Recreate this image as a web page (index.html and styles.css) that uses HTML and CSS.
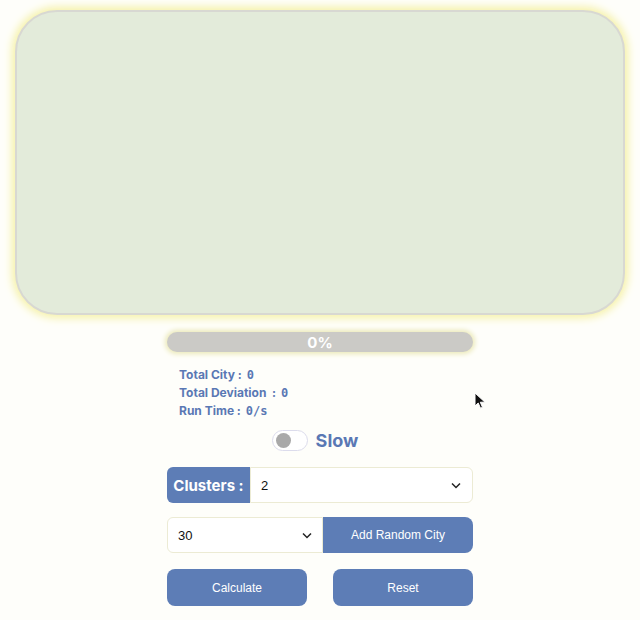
FILE: index.html
```html
<!DOCTYPE html>
<html lang="en">
  <head>
    <meta charset="UTF-8" />
    <title>Clustering</title>
    <link rel="stylesheet" href="styles.css">
  </head>
  <body>
    <div class="board"></div>

    <div class="controls">
      <div class="progress"><span>0%</span></div>

      <div class="stats">
        <div>Total City : <code>0</code></div>
        <div>Total Deviation &nbsp;: <code>0</code></div>
        <div>Run Time : <code>0/s</code></div>
      </div>

      <div class="speed">
        <label class="switch"><span class="knob"></span></label>
        <span class="speed-label">Slow</span>
      </div>

      <div class="cluster-row">
        <span class="cluster-label">Clusters :</span>
        <div class="select">
          <span>2</span>
          <svg width="10" height="7" viewBox="0 0 10 7"><path d="M1 1.5 5 5.5l4-4" fill="none" stroke="#222" stroke-width="1.5"/></svg>
        </div>
      </div>

      <div class="city-row">
        <div class="select">
          <span>30</span>
          <svg width="10" height="7" viewBox="0 0 10 7"><path d="M1 1.5 5 5.5l4-4" fill="none" stroke="#222" stroke-width="1.5"/></svg>
        </div>
        <button class="btn btn-add">Add Random City</button>
      </div>

      <div class="action-row">
        <button class="btn">Calculate</button>
        <button class="btn">Reset</button>
      </div>
    </div>

    <!-- mouse pointer captured in the shot -->
    <svg class="cursor" width="12" height="18" viewBox="0 0 12 18"><path d="M1 1v13l3.2-3 2.3 5.2 2-.9-2.2-5.1H11z" fill="#111" stroke="#fff" stroke-width="1"/></svg>
  </body>
</html>
```

FILE: styles.css
```css
body {
  margin: 0;
  background-color: #fefefa;
  font-family: Inter, "Noto Sans", sans-serif;
  position: relative;
}
.board {
  margin: 10px 15px 0;
  height: 301px;
  background-color: #e3ebda;
  border: 2px solid #d8d8d2;
  border-radius: 42px;
  box-shadow: 0 0 8px 3px #f5f1a6;
}
.controls {
  width: 306px;
  margin: 17px auto 0;
}
.progress {
  height: 20px;
  border-radius: 10px;
  background-color: #cbcac6;
  box-shadow: 0 0 5px 2px #ebe9b8;
  display: flex;
  align-items: center;
  justify-content: center;
}
.progress span {
  color: #fff;
  font-weight: 700;
  font-size: 15px;
}
.stats {
  margin-top: 14px;
  padding-left: 12px;
  color: #5a78b4;
  font-size: 12px;
  font-weight: 700;
  line-height: 18px;
}
.stats code {
  font-family: "DejaVu Sans Mono", monospace;
  font-size: 12px;
  font-weight: 700;
  margin-left: 2px;
}
.speed {
  margin-top: 9px;
  display: flex;
  align-items: center;
  justify-content: center;
  gap: 8px;
  height: 22px;
}
.switch {
  width: 31px;
  height: 19px;
  border: 1px solid #dcdcec;
  border-radius: 11px;
  background-color: #fff;
  display: flex;
  align-items: center;
  padding-left: 3px;
  box-sizing: content-box;
  margin-left: -10px;
}
.knob {
  width: 15px;
  height: 15px;
  border-radius: 50%;
  background-color: #a9a9a9;
}
.speed-label {
  color: #5a78b4;
  font-size: 18px;
  font-weight: 700;
}
.cluster-row {
  margin-top: 16px;
  display: flex;
  height: 36px;
}
.cluster-label {
  width: 83px;
  background-color: #5d7db6;
  color: #fff;
  font-weight: 700;
  font-size: 15px;
  border-radius: 6px 0 0 6px;
  display: flex;
  align-items: center;
  justify-content: center;
}
.select {
  flex: 1;
  display: flex;
  align-items: center;
  justify-content: space-between;
  padding: 0 11px 0 10px;
  background-color: #fff;
  border: 1px solid #ecebd4;
  font-family: "Liberation Sans", Arial, sans-serif;
  font-size: 13px;
  color: #111;
}
.cluster-row .select {
  border-radius: 0 6px 6px 0;
}
.city-row {
  margin-top: 14px;
  display: flex;
  height: 36px;
}
.city-row .select {
  flex: none;
  width: 156px;
  box-sizing: border-box;
  border-radius: 6px 0 0 6px;
  padding: 0 10px 0 10px;
}
.btn {
  border: none;
  background-color: #5d7db6;
  color: #fff;
  font-family: "Liberation Sans", Arial, sans-serif;
  font-size: 12px;
  border-radius: 8px;
  cursor: pointer;
}
.btn-add {
  flex: 1;
  border-radius: 0 8px 8px 0;
}
.action-row {
  margin-top: 16px;
  display: flex;
  justify-content: space-between;
}
.action-row .btn {
  width: 140px;
  height: 37px;
}
.cursor {
  position: absolute;
  left: 474px;
  top: 392px;
}
```
